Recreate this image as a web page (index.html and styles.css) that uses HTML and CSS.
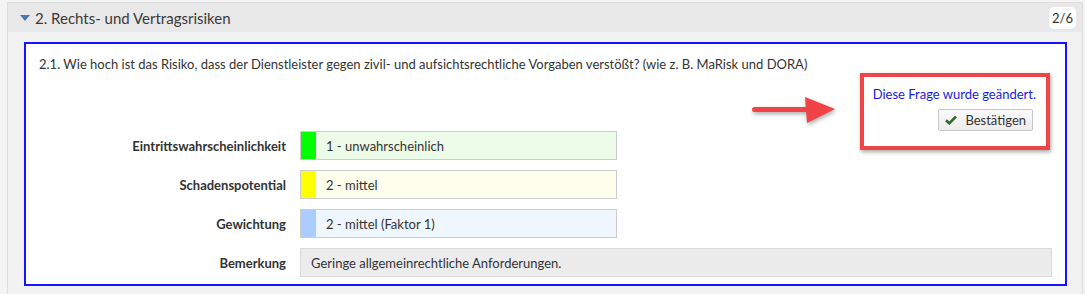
FILE: index.html
```html
<!DOCTYPE html>
<html>
<head>
  <meta charset="UTF-8">
  <meta name="viewport" content="width=device-width, initial-scale=1.0">
  <title>Risikobewertung</title>
  <link rel="stylesheet" href="styles.css">
</head>
<body>
  <div class="panel">
    <div class="panel-header">
      <span class="caret"></span>
      <span class="panel-title">2. Rechts- und Vertragsrisiken</span>
      <span class="badge">2/6</span>
    </div>
    <div class="panel-body">
      <div class="question">
        <p class="question-text">2.1. Wie hoch ist das Risiko, dass der Dienstleister gegen zivil- und aufsichtsrechtliche Vorgaben verstößt? (wie z. B. MaRisk und DORA)</p>

        <div class="status-row">
          <div class="status">
            <!-- annotation: arrow + red frame -->
            <svg class="arrow" width="90" height="30" viewBox="0 0 90 30">
              <rect x="1" y="11" width="56" height="5" rx="2.5" fill="#f04347"/>
              <polygon points="54,1 84,13 56,27" fill="#f04347"/>
            </svg>
            <div class="frame"></div>
            <a class="changed" href="#">Diese Frage wurde geändert.</a>
            <button class="confirm" type="button">
              <svg class="check" width="12" height="10" viewBox="0 0 12 10">
                <path d="M1 5.2 L4.3 8.3 L11 1.5" fill="none" stroke="#2d6b2d" stroke-width="2.6"/>
              </svg>Bestätigen</button>
          </div>
        </div>

        <div class="row">
          <div class="label">Eintrittswahrscheinlichkeit</div>
          <div class="field green"><span class="swatch"></span>1 - unwahrscheinlich</div>
        </div>
        <div class="row">
          <div class="label">Schadenspotential</div>
          <div class="field yellow"><span class="swatch"></span>2 - mittel</div>
        </div>
        <div class="row">
          <div class="label">Gewichtung</div>
          <div class="field blue"><span class="swatch"></span>2 - mittel (Faktor 1)</div>
        </div>
        <div class="row">
          <div class="label">Bemerkung</div>
          <div class="field note">Geringe allgemeinrechtliche Anforderungen.</div>
        </div>
      </div>
    </div>
  </div>
</body>
</html>
```

FILE: styles.css
```css
body {
  margin: 0;
  padding: 2px 2px 0 7px;
  background-color: #f4f4f4;
  font-family: Lato, "Liberation Sans", sans-serif;
  font-size: 13px;
  color: #333;
}
.panel {
  border: 1px solid #dcdcdc;
  border-bottom: none;
  background-color: #f2f2f2;
  height: 300px;
}
.panel-header {
  display: flex;
  align-items: center;
  height: 29px;
  background-color: #e8e8e8;
  padding-left: 12px;
}
.caret {
  width: 0;
  height: 0;
  border-left: 5px solid transparent;
  border-right: 5px solid transparent;
  border-top: 6px solid #4f72b0;
  margin-right: 5px;
}
.panel-title {
  font-size: 15px;
  color: #3a3a3a;
  flex: 1;
}
.badge {
  background-color: #fff;
  border-radius: 5px;
  padding: 3px 3px;
  margin-right: 6px;
  font-size: 13px;
  color: #333;
}
.panel-body {
  padding: 10px 15px 0 16px;
}
.question {
  background-color: #fff;
  border: 2px solid #1414ff;
  padding: 11px 13px 7px 13px;
}
.question-text {
  margin: 0;
  line-height: 18px;
}
.status-row {
  display: flex;
  justify-content: flex-end;
  margin-top: 12px;
  padding-right: 16px;
}
.status {
  position: relative;
  display: flex;
  flex-direction: column;
  align-items: flex-end;
  width: 164px;
}
.changed {
  color: #1a1ae6;
  text-decoration: none;
  line-height: 18px;
  white-space: nowrap;
}
.confirm {
  display: flex;
  align-items: center;
  margin-top: 6px;
  margin-right: 3px;
  height: 22px;
  padding: 0 6px 0 6px;
  font-family: inherit;
  font-size: 13px;
  color: #333;
  background: linear-gradient(#fafafa, #ececec);
  border: 1px solid #c8c8c8;
  border-radius: 2px;
}
.check {
  margin-right: 8px;
}
.frame {
  position: absolute;
  left: -12px;
  right: -14px;
  top: -12px;
  bottom: -19px;
  border: 4px solid #ef4448;
  box-shadow: 1px 2px 4px rgba(0, 0, 0, 0.35);
}
.arrow {
  position: absolute;
  left: -121px;
  top: 11px;
  filter: drop-shadow(1px 2px 2px rgba(0, 0, 0, 0.35));
}
.row {
  display: flex;
  align-items: center;
  margin-bottom: 10px;
}
.row:last-child {
  margin-bottom: 0;
}
.label {
  width: 247px;
  text-align: right;
  font-weight: bold;
  padding-right: 14px;
}
.field {
  display: flex;
  align-items: center;
  width: 315px;
  height: 27px;
  border: 1px solid #cccccc;
}
.swatch {
  width: 15px;
  height: 100%;
  margin-right: 10px;
}
.green { background-color: #ecfce9; }
.green .swatch { background-color: #00ff00; }
.yellow { background-color: #fefeec; }
.yellow .swatch { background-color: #ffff00; }
.blue { background-color: #eff6fe; }
.blue .swatch { background-color: #aaccff; }
.note {
  width: 740px;
  padding-left: 10px;
  background-color: #ececec;
  border-color: #dadada;
}
```
